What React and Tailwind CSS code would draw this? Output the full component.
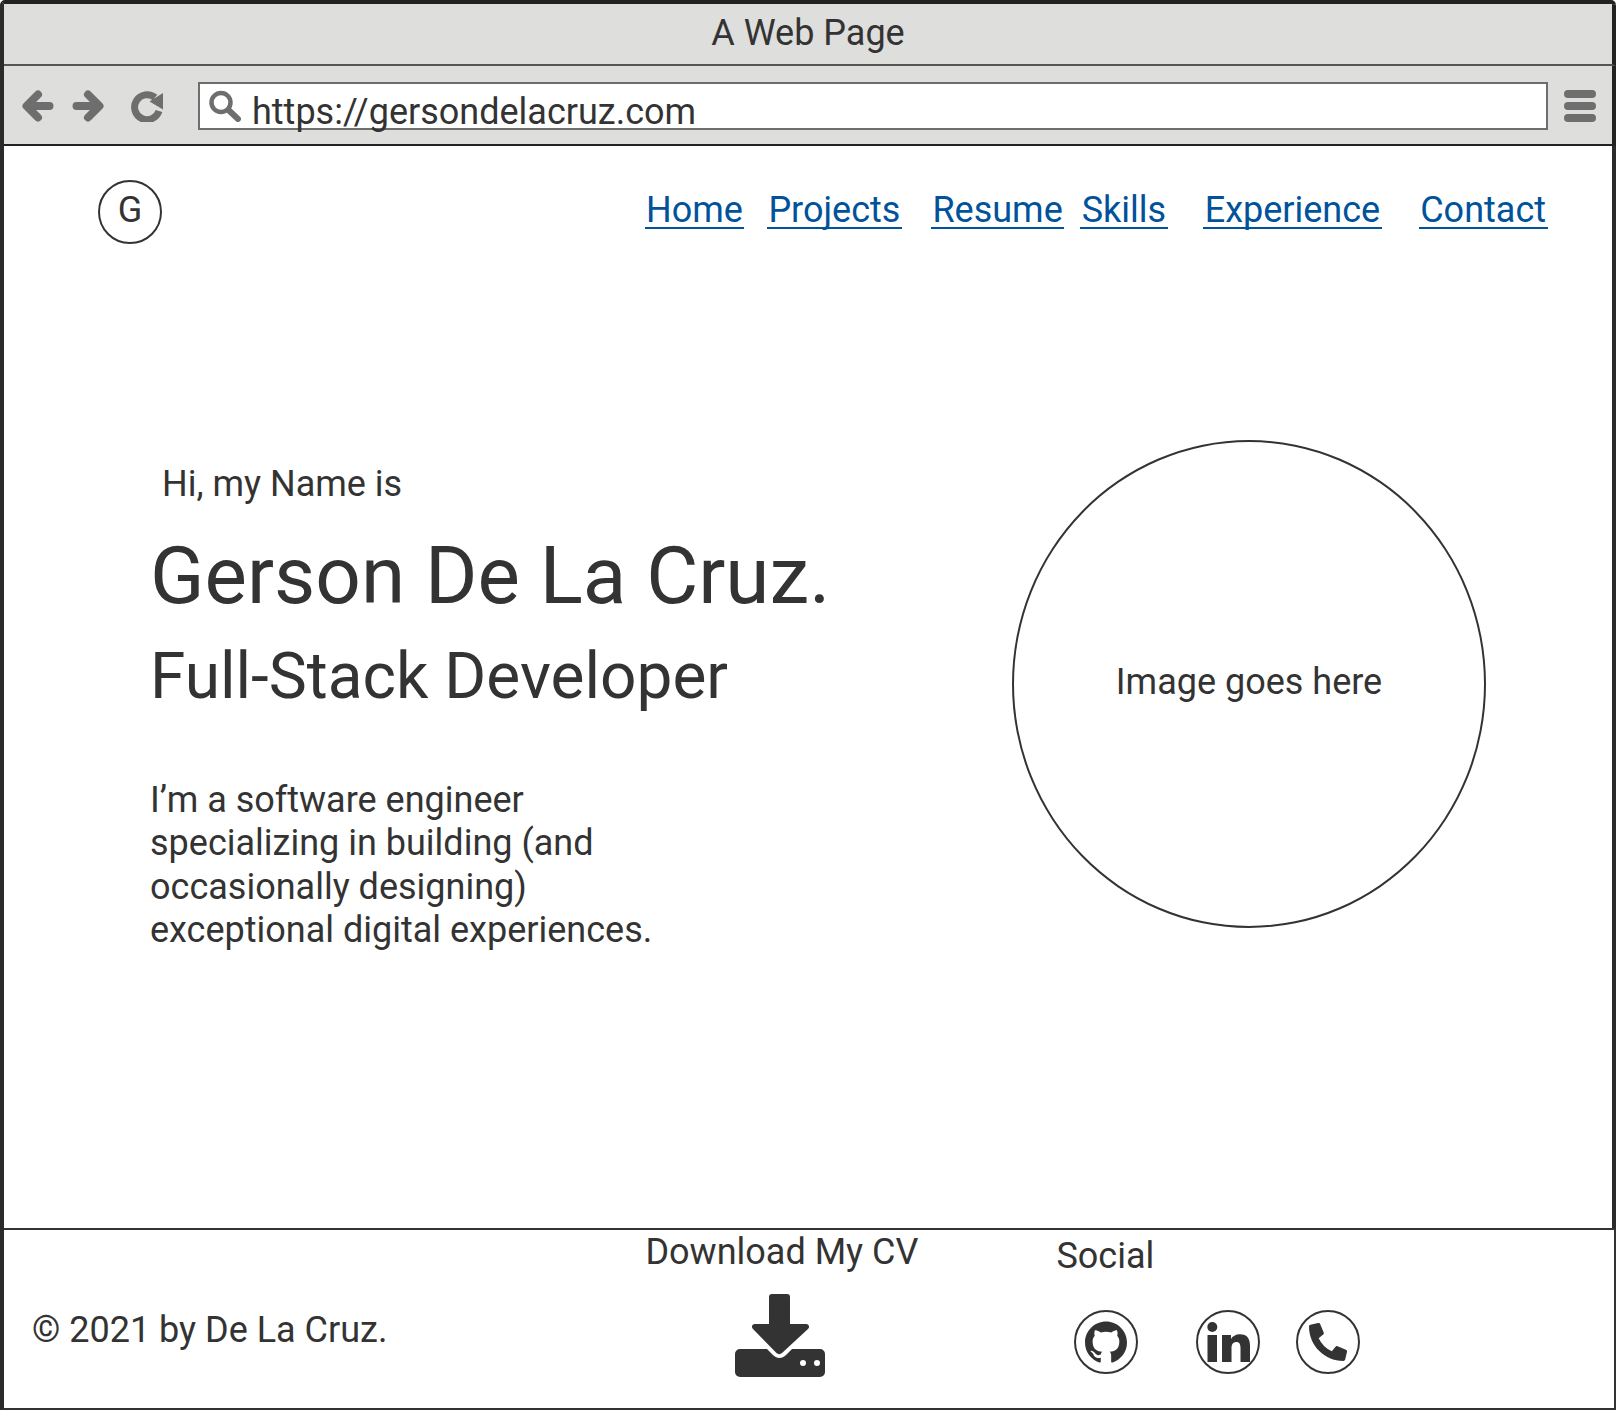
import React from "react";
import { SiGithub } from "react-icons/si";
import { FaPhoneAlt } from "react-icons/fa";

function DownloadIcon() {
  return (
    <svg width="90" height="83" viewBox="0 0 90 83" fill="#333333">
      <path d="M34 3a3 3 0 0 1 3-3h15a3 3 0 0 1 3 3v27h16c3 0 4 3 2 5L47 59c-1.500 1.500-4 1.500-5.500 0L18 35c-2-2-1-5 2-5h14z" />
      <path fillRule="evenodd" d="M5 55h27l6 6c4 4 9 4 13 0l6-6h28a5 5 0 0 1 5 5v18a5 5 0 0 1-5 5H5a5 5 0 0 1-5-5V60a5 5 0 0 1 5-5zM65 69a3 3 0 1 0 6 0a3 3 0 1 0-6 0zM79 69a3 3 0 1 0 6 0a3 3 0 1 0-6 0z" />
    </svg>
  );
}

function ArrowLeft({ className }) {
  return (
    <svg width="32" height="32" viewBox="0 0 32 32" fill="none" stroke="#6e6e6e" strokeWidth="8" strokeLinecap="round" strokeLinejoin="round" className={className}>
      <path d="M27.500 16H5M16 4.500L4.500 16L16 27.500" />
    </svg>
  );
}

function ArrowRight({ className }) {
  return (
    <svg width="32" height="32" viewBox="0 0 32 32" fill="none" stroke="#6e6e6e" strokeWidth="8" strokeLinecap="round" strokeLinejoin="round" className={className}>
      <path d="M4.500 16H27M16 4.500L27.500 16L16 27.500" />
    </svg>
  );
}

function Reload({ className }) {
  return (
    <svg width="32" height="32" viewBox="0 0 32 32" className={className}>
      <path d="M24 7.500A12.500 12.500 0 1 0 28 21" fill="none" stroke="#6e6e6e" strokeWidth="7" />
      <path d="M32 3V19.500L18.500 11.500z" fill="#6e6e6e" />
    </svg>
  );
}

function Search() {
  return (
    <svg width="32" height="32" viewBox="0 0 32 32" fill="none" stroke="#6e6e6e" className="shrink-0">
      <circle cx="12" cy="12.500" r="9.500" strokeWidth="4.500" />
      <path d="M19.500 20L29 29" strokeWidth="6" strokeLinecap="round" />
    </svg>
  );
}

function LinkedIn() {
  return (
    <svg width="43" height="40" viewBox="0 0 43 40" fill="#333333">
      <circle cx="5.300" cy="5" r="5" />
      <rect x="0.500" y="13" width="9.500" height="27" />
      <path d="M15 13h9v4c1.500-2.600 4.600-4.700 8.800-4.700C40.500 12.300 43 17 43 24v16h-9.500V26c0-3.800-1-6-4-6s-5 2-5 6v14H15z" />
    </svg>
  );
}

function NavLink({ children, className }) {
  return (
    <a href="#" className={"h-[37px] border-b-2 border-[#00529b] px-[1.500px] text-[#00529b] " + className}>
      {children}
    </a>
  );
}

function IconCircle({ children, className }) {
  return (
    <div className={"flex h-[64px] w-[64px] items-center justify-center rounded-full border-2 border-[#333333] " + className}>
      {children}
    </div>
  );
}

export default function App() {
  return (
    <div className="h-[1422px] bg-white font-['Roboto',sans-serif] text-[#333333]">
      <div className="flex h-[1410px] flex-col overflow-hidden rounded-t-[5px] border-l-[4px] border-t-[4px] border-b-2 border-l-[#2b2b2b] border-t-[#222222] border-b-[#333333]">
        <header className="flex h-[62px] shrink-0 items-center justify-center border-b-2 border-r-[4px] border-b-[#555555] border-r-[#222222] bg-[#dededc] pb-[3px] text-[36px] leading-none">
          A Web Page
        </header>
        <div className="flex h-[80px] shrink-0 items-center border-b-2 border-r-[4px] border-b-[#222222] border-r-[#222222] bg-[#dededc] pt-[2px] pl-[18px] pr-[16px]">
          <ArrowLeft />
          <ArrowRight className="ml-[18px]" />
          <Reload className="ml-[27px]" />
          <div className="ml-[35px] flex h-[48px] flex-1 items-center border-2 border-[#6e6e6e] bg-white pl-[9px]">
            <Search />
            <span className="mt-[12px] ml-[11px] text-[36px] leading-none">https://gersondelacruz.com</span>
          </div>
          <div className="ml-[16px] flex w-[32px] flex-col gap-[4px]">
            <span className="h-[8px] rounded-full bg-[#6e6e6e]" />
            <span className="h-[8px] rounded-full bg-[#6e6e6e]" />
            <span className="h-[8px] rounded-full bg-[#6e6e6e]" />
          </div>
        </div>
        <main className="flex flex-1 flex-col border-r-[4px] border-[#2b2b2b]">
          <nav className="flex items-start pt-[34px] pl-[94px] text-[36px] leading-none">
            <div className="flex h-[64px] w-[64px] items-center justify-center rounded-full border-2 border-[#333333] pb-[4px]">G</div>
            <div className="ml-[482.500px] mt-[12px] flex items-start">
              <NavLink>Home</NavLink>
              <NavLink className="ml-[22.500px]">Projects</NavLink>
              <NavLink className="ml-[29px]">Resume</NavLink>
              <NavLink className="ml-[16px]">Skills</NavLink>
              <NavLink className="ml-[35.500px]">Experience</NavLink>
              <NavLink className="ml-[37px]">Contact</NavLink>
            </div>
          </nav>
          <section className="flex flex-1 items-start pt-[196px]">
            <div className="ml-[146px] w-[862px]">
              <p className="ml-[12px] mt-[26px] text-[36px] leading-none">Hi, my Name is</p>
              <h1 className="mt-[34px] text-[80px] leading-none">Gerson De La Cruz.</h1>
              <h2 className="mt-[29px] text-[64px] leading-none">Full-Stack Developer</h2>
              <p className="mt-[70px] w-[520px] text-[36px] leading-[43.300px]">
                I’m a software engineer specializing in building (and occasionally designing) exceptional digital experiences.
              </p>
            </div>
            <div className="flex h-[488px] w-[474px] items-center justify-center rounded-[50%] border-2 border-[#333333] pb-[4px] text-[36px]">
              Image goes here
            </div>
          </section>
        </main>
        <footer className="flex h-[180px] shrink-0 border-t-2 border-r-2 border-[#333333] text-[36px] leading-none">
          <p className="ml-[28px] mt-[82px]">© 2021 by De La Cruz.</p>
          <div className="ml-[258px] mt-[4px] flex flex-col">
            <span>Download My CV</span>
            <div className="ml-[90px] mt-[24px]"><DownloadIcon /></div>
          </div>
          <div className="ml-[138px] mt-[8px] flex flex-col">
            <span>Social</span>
            <div className="ml-[18px] mt-[36px] flex">
              <IconCircle><SiGithub size={42} /></IconCircle>
              <IconCircle className="ml-[58px]"><LinkedIn /></IconCircle>
              <IconCircle className="ml-[36px]"><FaPhoneAlt size={38} /></IconCircle>
            </div>
          </div>
        </footer>
      </div>
    </div>
  );
}
